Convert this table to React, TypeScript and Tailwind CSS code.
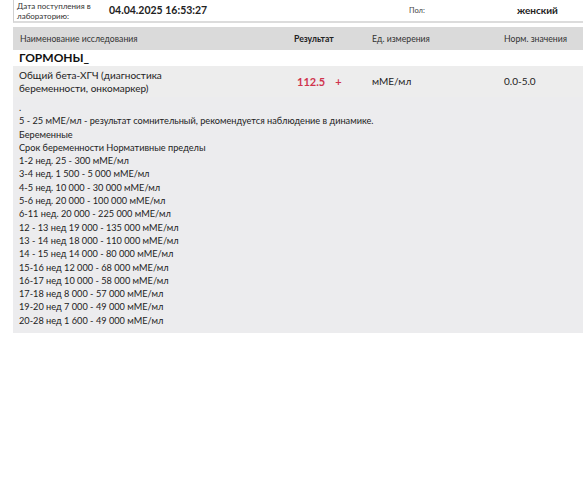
export default function App() {
  const lines = [
    ".",
    "5 - 25 мМЕ/мл - результат сомнительный, рекомендуется наблюдение в динамике.",
    "Беременные",
    "Срок беременности Нормативные пределы",
    "1-2 нед. 25 - 300 мМЕ/мл",
    "3-4 нед. 1 500 - 5 000 мМЕ/мл",
    "4-5 нед. 10 000 - 30 000 мМЕ/мл",
    "5-6 нед. 20 000 - 100 000 мМЕ/мл",
    "6-11 нед. 20 000 - 225 000 мМЕ/мл",
    "12 - 13 нед 19 000 - 135 000 мМЕ/мл",
    "13 - 14 нед 18 000 - 110 000 мМЕ/мл",
    "14 - 15 нед 14 000 - 80 000 мМЕ/мл",
    "15-16 нед 12 000 - 68 000 мМЕ/мл",
    "16-17 нед 10 000 - 58 000 мМЕ/мл",
    "17-18 нед 8 000 - 57 000 мМЕ/мл",
    "19-20 нед 7 000 - 49 000 мМЕ/мл",
    "20-28 нед 1 600 - 49 000 мМЕ/мл",
  ];
  return (
    <div className="w-[583px] h-[500px] bg-white pl-[13px] text-[#222]" style={{ fontFamily: "Lato, 'Noto Sans', sans-serif" }}>
      <div className="flex items-center h-[23px] border-l border-[#d0d0d0] border-b-2 border-b-[#dcdcdc]">
        <div className="w-[95px] pl-[3px] text-[8px] leading-[10px] text-[#333]">Дата поступления в<br />лабораторию:</div>
        <div className="w-[300px] text-[10.5px] font-bold">04.04.2025 16:53:27</div>
        <div className="w-[108px] text-[7.5px] text-[#444]">Пол:</div>
        <div className="text-[10px] font-bold">женский</div>
      </div>
      <div className="mt-[4px] flex items-center h-[23px] bg-[#dadada] text-[8.7px] text-[#333]">
        <div className="w-[270px] pl-[7px]">Наименование исследования</div>
        <div className="w-[89px] pl-[11px] font-bold text-[#222]">Результат</div>
        <div className="w-[132px]">Ед. измерения</div>
        <div>Норм. значения</div>
      </div>
      <div className="h-[16px] pl-[6px] text-[12px] leading-[16px] font-bold text-[#111]">ГОРМОНЫ_</div>
      <div className="flex items-center h-[31px] bg-[#ededed] text-[10px] leading-[13px] text-[#222]">
        <div className="w-[270px] pl-[6px]">Общий бета-ХГЧ (диагностика<br />беременности, онкомаркер)</div>
        <div className="w-[89px] pl-[14px] text-[11px] font-bold text-[#d0344d]">
          112.5<span className="ml-[10px]">+</span>
        </div>
        <div className="w-[132px]">мМЕ/мл</div>
        <div>0.0-5.0</div>
      </div>
      <div className="bg-[#ececee] pl-[6px] pt-[4px] pb-[6px] text-[9.2px] leading-[13.3px] text-[#222]">
        {lines.map((l, i) => (
          <div key={i}>{l}</div>
        ))}
      </div>
    </div>
  );
}
